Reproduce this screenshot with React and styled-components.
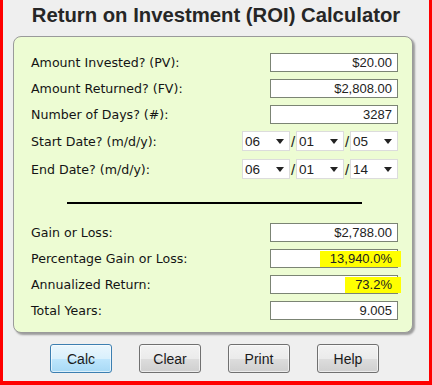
import styled, { createGlobalStyle } from 'styled-components';

const GlobalStyle = createGlobalStyle`
  html, body {
    margin: 0;
    padding: 0;
    background: #efefef;
  }
`;

const inputs = [
  { label: 'Amount Invested? (PV):', value: '$20.00' },
  { label: 'Amount Returned? (FV):', value: '$2,808.00' },
  { label: 'Number of Days? (#):', value: '3287' },
];

const dates = [
  { label: 'Start Date? (m/d/y):', parts: ['06', '01', '05'] },
  { label: 'End Date? (m/d/y):', parts: ['06', '01', '14'] },
];

const results = [
  { label: 'Gain or Loss:', value: '$2,788.00' },
  { label: 'Percentage Gain or Loss:', value: '13,940.0%', marked: true },
  { label: 'Annualized Return:', value: '73.2%', marked: true },
  { label: 'Total Years:', value: '9.005' },
];

function App() {
  return (
    <>
      <GlobalStyle />
      <Page>
        <Title>Return on Investment (ROI) Calculator</Title>
        <Panel>
          {inputs.map((r) => (
            <Row key={r.label} $h={26}>
              <Label>{r.label}</Label>
              <ValueBox>{r.value}</ValueBox>
            </Row>
          ))}
          {dates.map((d) => (
            <Row key={d.label} $h={28}>
              <Label>{d.label}</Label>
              <DateGroup>
                {d.parts.map((p, i) => (
                  <DatePart key={i}>
                    {i > 0 && <Slash>/</Slash>}
                    <Picker>
                      {p}
                      <Arrow />
                    </Picker>
                  </DatePart>
                ))}
              </DateGroup>
            </Row>
          ))}
          <Divider />
          {results.map((r) => (
            <Row key={r.label} $h={26}>
              <Label>{r.label}</Label>
              <ValueBox>
                {r.marked ? <Marked>{r.value}</Marked> : r.value}
              </ValueBox>
            </Row>
          ))}
        </Panel>
        <ButtonBar>
          <Button $focused>Calc</Button>
          <Button>Clear</Button>
          <Button>Print</Button>
          <Button>Help</Button>
        </ButtonBar>
      </Page>
    </>
  );
}

const Page = styled.div`
  width: 432px;
  height: 385px;
  box-sizing: border-box;
  border-left: 3px solid #ff0000;
  border-right: 3px solid #ff0000;
  border-bottom: 4px solid #ff0000;
  background: #efefef;
  display: flex;
  flex-direction: column;
  font-family: "Liberation Sans", Arial, sans-serif;
`;

const Title = styled.div`
  height: 30px;
  line-height: 30px;
  margin-bottom: 6px;
  text-align: center;
  font-size: 20.3px;
  font-weight: bold;
  color: #262626;
`;

const Panel = styled.div`
  margin-left: 10px;
  width: 400px;
  box-sizing: border-box;
  padding: 12px 14px 9px 17px;
  background: #edfcd3;
  border: 1px solid #9a9a9a;
  border-radius: 8px;
  box-shadow: 2px 2px 2px rgba(0, 0, 0, 0.35);
  display: flex;
  flex-direction: column;
`;

const Row = styled.div`
  height: ${(p) => p.$h}px;
  display: flex;
  align-items: center;
  justify-content: space-between;
`;

const Label = styled.span`
  font-family: "DejaVu Sans", Verdana, sans-serif;
  font-size: 12.6px;
  color: #141414;
`;

const ValueBox = styled.div`
  width: 128px;
  height: 19px;
  box-sizing: border-box;
  border: 1px solid #7b8474;
  background: #fff;
  padding-right: 5px;
  text-align: right;
  font-size: 13px;
  line-height: 17px;
  color: #222;
  white-space: nowrap;
`;

const Marked = styled.span`
  display: inline-block;
  background: #ffff00;
  line-height: 16px;
  padding: 0 9px 0 10px;
  margin-right: -9px;
  position: relative;
`;

const DateGroup = styled.div`
  display: flex;
  align-items: center;
`;

const DatePart = styled.div`
  display: flex;
  align-items: center;
`;

const Slash = styled.span`
  width: 6px;
  text-align: center;
  font-size: 15px;
  color: #222;
`;

const Picker = styled.div`
  width: 48px;
  height: 20px;
  box-sizing: border-box;
  border: 1px solid #dcdcdc;
  background: #fff;
  display: flex;
  align-items: center;
  justify-content: space-between;
  padding: 0 5px 0 2px;
  font-size: 13.5px;
  color: #222;
`;

const Arrow = styled.span`
  width: 0;
  height: 0;
  border-left: 4px solid transparent;
  border-right: 4px solid transparent;
  border-top: 5px solid #222;
`;

const Divider = styled.div`
  width: 295px;
  height: 2px;
  background: #000;
  margin: 19px auto 15px;
`;

const ButtonBar = styled.div`
  display: flex;
  gap: 27px;
  padding-left: 47px;
  margin-top: 11px;
`;

const Button = styled.button`
  width: 62px;
  height: 29px;
  border-radius: 3px;
  font-family: "Liberation Sans", Arial, sans-serif;
  font-size: 14px;
  color: #1a1a1a;
  padding: 0;
  border: 1px solid ${(p) => (p.$focused ? '#3c7fb1' : '#707070')};
  background: ${(p) =>
    p.$focused
      ? 'linear-gradient(#eaf6fd 0%, #d9f0fc 50%, #bee6fd 51%, #a7d9f5 100%)'
      : 'linear-gradient(#f2f2f2 0%, #ebebeb 50%, #dddddd 51%, #cfcfcf 100%)'};
  box-shadow: inset 0 0 0 1px rgba(255, 255, 255, 0.6);
`;

export default App;
